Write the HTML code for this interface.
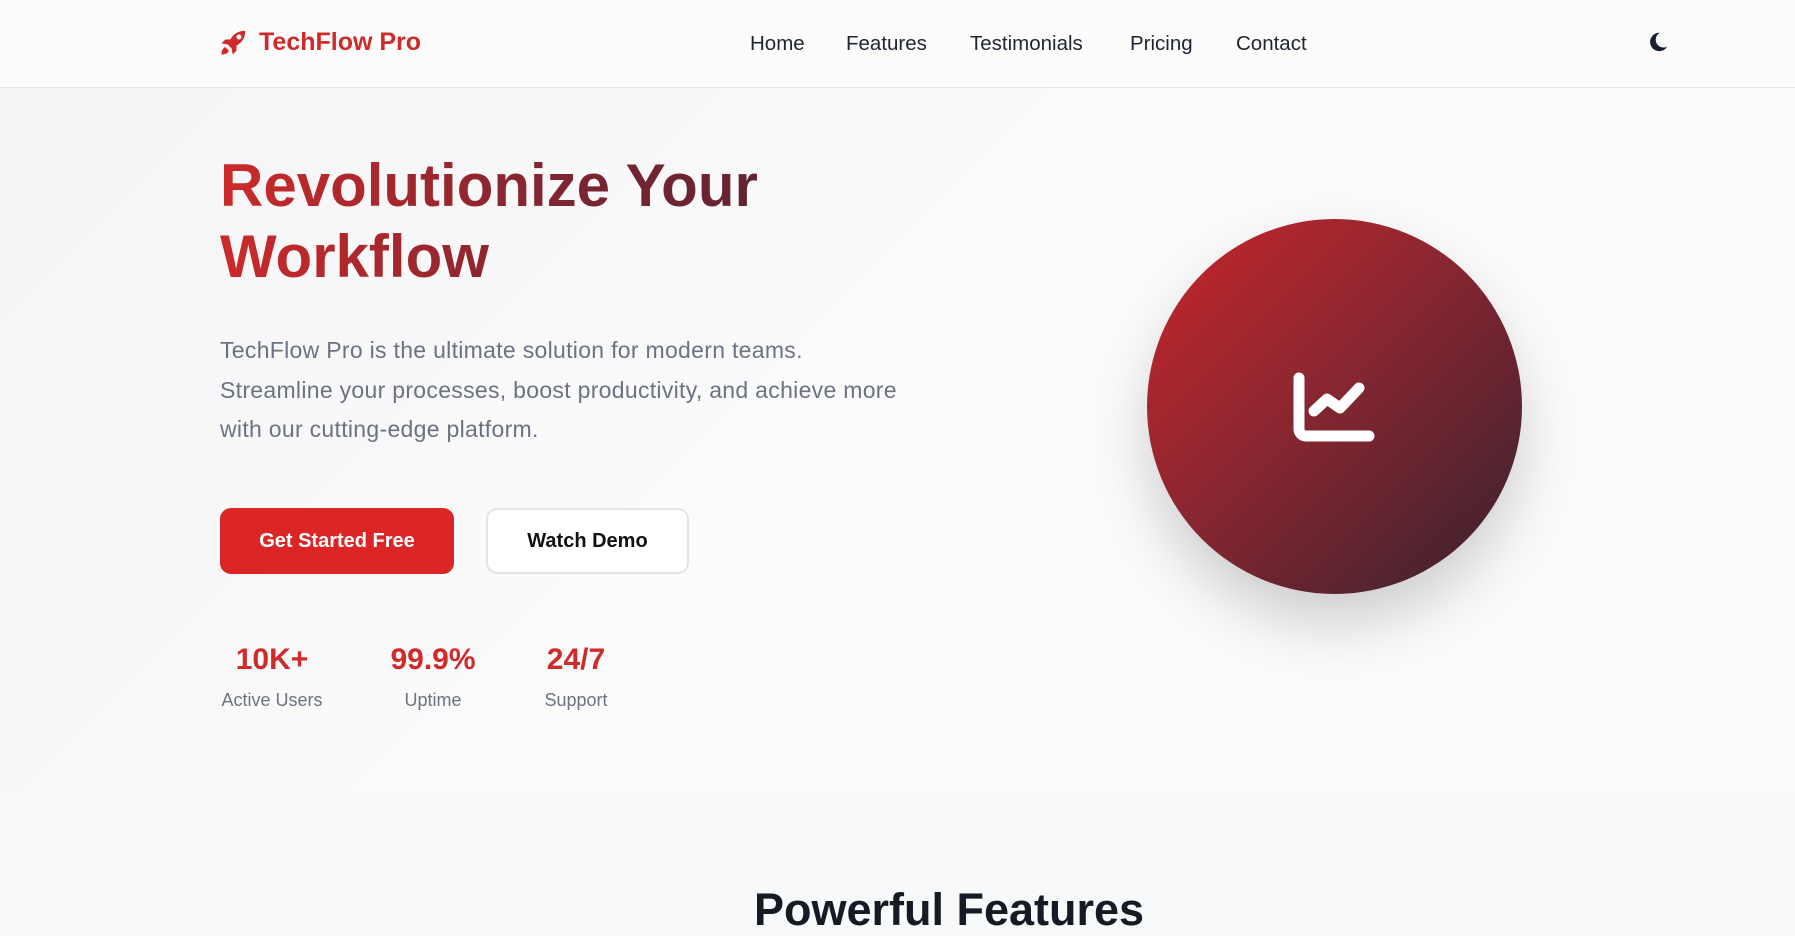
<!DOCTYPE html>
<html><head><meta charset="utf-8"><style>
*{margin:0;padding:0;box-sizing:border-box}
body{width:1795px;height:917px;overflow:hidden;font-family:"Liberation Sans",Arial,sans-serif;background:#f8f9fb}
nav{position:absolute;top:0;left:0;width:1795px;height:88px;background:#fcfcfd;border-bottom:1px solid #e8e8ec;z-index:2}
.logo{position:absolute;left:219px;top:27px;display:flex;align-items:center;color:#d12a2a;font-weight:bold;font-size:25px}
.logo span{margin-left:10px}
.links a{position:absolute;top:32px;font-size:20.5px;color:#1f2430;text-decoration:none}
.hero{position:absolute;top:88px;left:0;width:1795px;height:705px;background:linear-gradient(135deg,#f4f4f6 0%,#fbfbfc 45%,#fbfbfc 100%)}
h1{position:absolute;left:220px;top:150px;font-size:60px;line-height:71px;font-weight:bold;background:linear-gradient(90deg,#cc2a2a 0%,#7a2530 60%,#5a2432 100%);-webkit-background-clip:text;background-clip:text;color:transparent;width:600px}
p.lead{position:absolute;left:220px;top:331px;font-size:23px;letter-spacing:0.3px;line-height:39.5px;color:#6b7280;white-space:nowrap}
.btn{position:absolute;top:508px;height:66px;border-radius:11px;font-weight:bold;font-size:20px;display:flex;align-items:center;justify-content:center}
.b1{left:220px;width:234px;background:#dc2626;color:#fff}
.b2{left:486px;width:203px;background:#fff;border:2px solid #e4e4e8;color:#111}
.stat{position:absolute;top:641px;text-align:center}
.stat .n{font-size:30px;font-weight:bold;color:#d12a2a;line-height:38px}
.stat .l{font-size:18px;color:#6b7280;margin-top:11px}
.circle{position:absolute;left:1147px;top:219px;width:375px;height:375px;border-radius:50%;background:linear-gradient(135deg,#c9252a 0%,#8a2630 45%,#35222e 100%);box-shadow:0 30px 60px rgba(0,0,0,.18)}
h2{position:absolute;top:884px;left:0;width:1898px;text-align:center;font-size:45px;font-weight:bold;color:#151a24}
</style></head><body>
<nav>
<div class="logo"><svg width="30" height="30" viewBox="0 0 24 24"><path d="M21 3c-5 0-9 2-12 7l-4 0-3 3 5 1 3 3 1 5 3-3 0-4c5-3 7-7 7-12z" fill="#d12a2a"/><circle cx="16" cy="8" r="2" fill="#fcfcfd"/><path d="M5 16c-2 1-3 3-3 6 3 0 5-1 6-3z" fill="#d12a2a"/></svg><span>TechFlow Pro</span></div>
<div class="links"><a style="left:750px">Home</a><a style="left:846px">Features</a><a style="left:970px">Testimonials</a><a style="left:1130px">Pricing</a><a style="left:1236px">Contact</a></div>
<svg style="position:absolute;left:1647px;top:31px" width="22" height="22" viewBox="0 0 24 24"><path d="M14 2a10 10 0 1 0 8 15A8 8 0 0 1 14 2z" fill="#1a2033"/></svg>
</nav>
<div class="hero">
</div>
<h1>Revolutionize Your Workflow</h1>
<p class="lead">TechFlow Pro is the ultimate solution for modern teams.<br>Streamline your processes, boost productivity, and achieve more<br>with our cutting-edge platform.</p>
<div class="btn b1">Get Started Free</div>
<div class="btn b2">Watch Demo</div>
<div class="stat" style="left:220px;width:104px"><div class="n">10K+</div><div class="l">Active Users</div></div>
<div class="stat" style="left:380px;width:106px"><div class="n">99.9%</div><div class="l">Uptime</div></div>
<div class="stat" style="left:536px;width:80px"><div class="n">24/7</div><div class="l">Support</div></div>
<div class="circle"></div>
<svg style="position:absolute;left:0;top:0" width="1795" height="917"><g fill="none" stroke="#fff" stroke-width="11" stroke-linecap="round" stroke-linejoin="round"><path d="M1299 378V429a7 7 0 0 0 7 7H1369"/><path d="M1314 411L1327 399L1340 408L1359 388"/></g></svg>
<h2>Powerful Features</h2>
</body></html>
